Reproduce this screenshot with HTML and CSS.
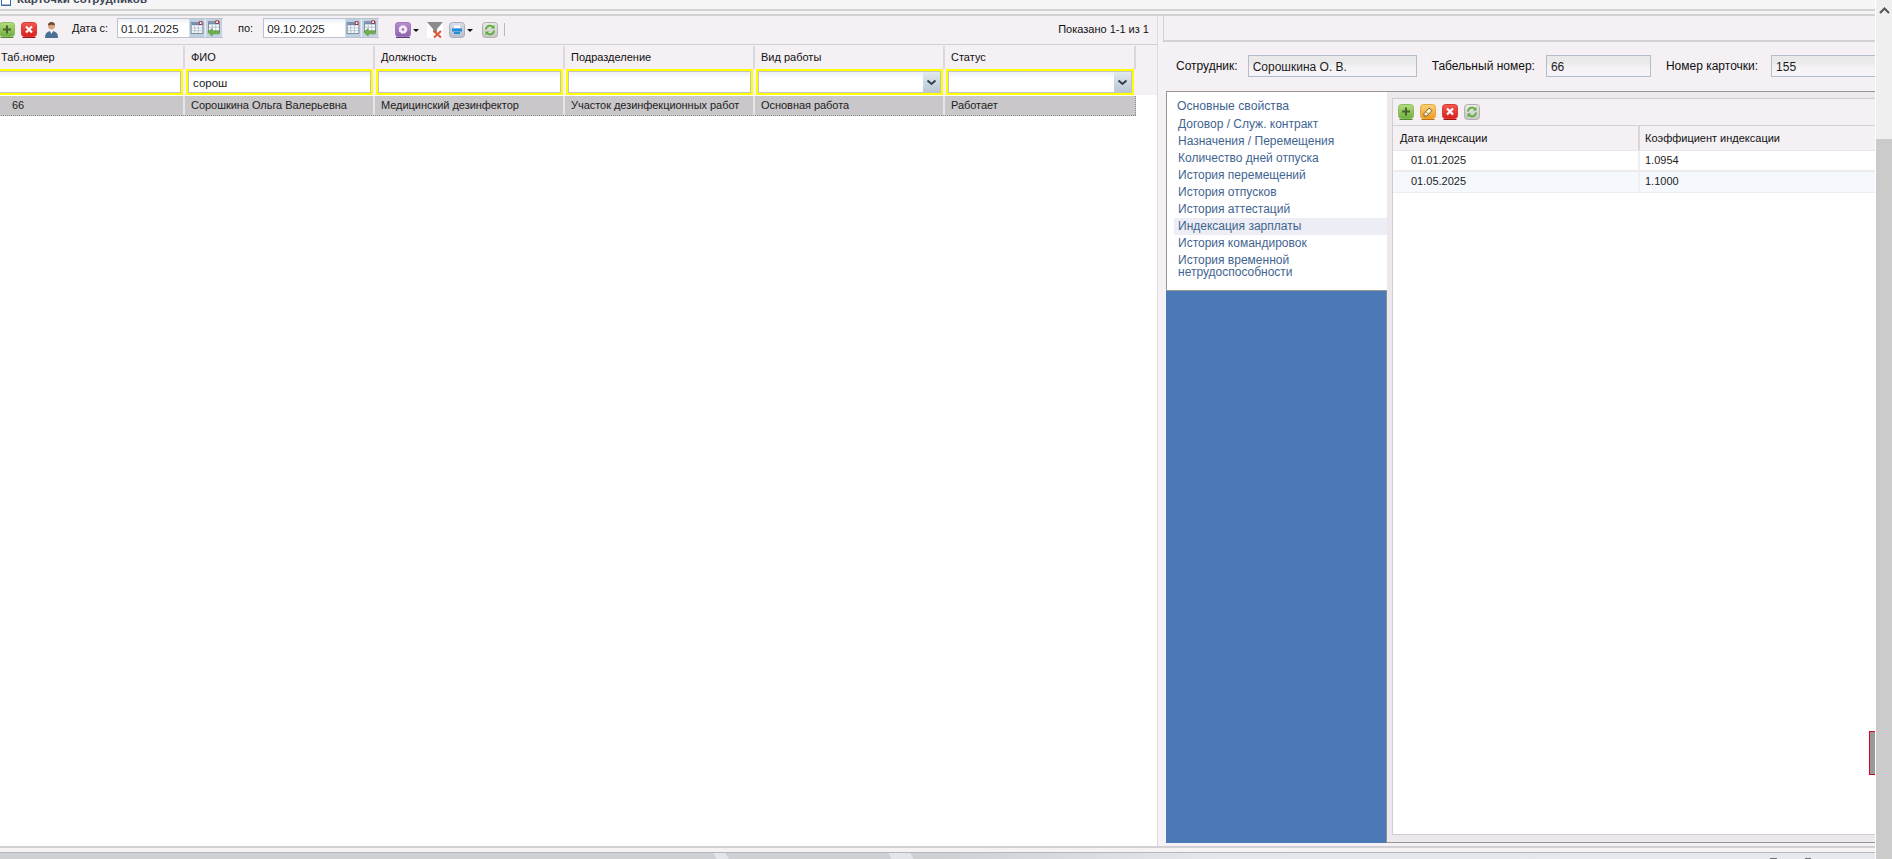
FILE: index.html
```html
<!DOCTYPE html>
<html lang="ru">
<head>
<meta charset="utf-8">
<title>Карточки сотрудников</title>
<link rel="stylesheet" href="styles.css">
</head>
<body>
<svg class="defs" width="0" height="0" aria-hidden="true">
  <defs>
    <linearGradient id="gGreen" x1="0" y1="0" x2="0" y2="1"><stop offset="0" stop-color="#b4de7c"/><stop offset="1" stop-color="#6fae3f"/></linearGradient>
    <linearGradient id="gRed" x1="0" y1="0" x2="0" y2="1"><stop offset="0" stop-color="#f25a4e"/><stop offset="1" stop-color="#d81f1f"/></linearGradient>
    <linearGradient id="gOrange" x1="0" y1="0" x2="0" y2="1"><stop offset="0" stop-color="#fbd27a"/><stop offset="1" stop-color="#f29a1e"/></linearGradient>
    <linearGradient id="gPurple" x1="0" y1="0" x2="0" y2="1"><stop offset="0" stop-color="#b78fd0"/><stop offset="1" stop-color="#8f62ad"/></linearGradient>
    <linearGradient id="gGrey" x1="0" y1="0" x2="0" y2="1"><stop offset="0" stop-color="#e8e8e4"/><stop offset="1" stop-color="#c4c6c2"/></linearGradient>
    <linearGradient id="gPrint" x1="0" y1="0" x2="0" y2="1"><stop offset="0" stop-color="#d9dfe8"/><stop offset="1" stop-color="#b4bdca"/></linearGradient>
    <symbol id="i-add" viewBox="0 0 16 16"><rect x=".5" y=".5" width="15" height="14" rx="3" fill="url(#gGreen)" stroke="#8dbb62"/><path d="M1.5 15.500h13" stroke="#55872c"/><path d="M8 3.500v8M4 7.500h8" stroke="#46622f" stroke-width="2"/></symbol>
    <symbol id="i-del" viewBox="0 0 16 16"><rect x=".5" y=".5" width="15" height="14" rx="3" fill="url(#gRed)" stroke="#d93a32"/><path d="M1.5 15.500h13" stroke="#9c1414"/><path d="M5 4.500l6 6M11 4.500l-6 6" stroke="#fff" stroke-width="2.200"/></symbol>
    <symbol id="i-edit" viewBox="0 0 16 16"><rect x=".5" y=".5" width="15" height="14" rx="3" fill="url(#gOrange)" stroke="#e8a640"/><path d="M1.5 15.500h13" stroke="#b8720f"/><path d="M4 9.500l5-5.500 3 2.500-5 5.500-3 0z" fill="#fff3d0" stroke="#6b5a3a" stroke-width=".9"/><path d="M6 8l3 2.500" stroke="#6b5a3a" stroke-width=".7"/></symbol>
    <symbol id="i-refresh" viewBox="0 0 16 16"><rect x=".5" y=".5" width="15" height="15" rx="3" fill="url(#gGrey)" stroke="#b0b2ae"/><path d="M4 7.500a4 4 0 0 1 7-2.500M12 8.500a4 4 0 0 1-7 2.500" fill="none" stroke="#58ad35" stroke-width="1.700"/><path d="M12.500 2.800v3.700H8.800zM3.500 13.200V9.500h3.700z" fill="#58ad35"/></symbol>
    <symbol id="i-cal" viewBox="0 0 17 20"><rect width="17" height="20" fill="#bcd0e2"/><rect x="2" y="4" width="13" height="12" fill="#fff" stroke="#6d7f93"/><path d="M2.500 4.500h12v2.500h-12z" fill="#6f8db0"/><path d="M6 7v9M10 7v9M2 10h13M2 13h13" stroke="#9fb0c2" stroke-width=".8"/><rect x="11" y="3" width="3" height="3" fill="#fff" stroke="#a01828" stroke-width=".9"/></symbol>
    <symbol id="i-calback" viewBox="0 0 18 20"><rect width="18" height="20" fill="#c5d3e0"/><rect x="3" y="3" width="12" height="11" fill="#fff" stroke="#6d7f93"/><path d="M3.500 3.500h11v2.500h-11z" fill="#6f8db0"/><path d="M7 6v8M11 6v8M3 9h12" stroke="#9fb0c2" stroke-width=".8"/><rect x="11" y="2" width="3" height="3" fill="#fff" stroke="#a01828" stroke-width=".9"/><path d="M2 14.500l5-4v2.500h8v3.500h-8v2.500z" fill="#6fb04a" stroke="#4d8a32" stroke-width=".6"/></symbol>
  </defs>
</svg>

<div class="app">
  <div class="main">
    <header class="title">
      <svg class="title-icon" width="10" height="9" viewBox="0 0 10 9"><rect x=".5" y="-5" width="9" height="10" fill="#fff" stroke="#3c6da8"/><path d="M0 5.500h10" stroke="#3c6da8"/></svg>
      <span class="title-text">Карточки сотрудников</span>
    </header>
    <div class="rule"></div>
    <div class="rule-gap"></div>
    <div class="rule"></div>

    <div class="workspace">
      <section class="left">
        <div class="left-top">
          <div class="toolbar">
            <div class="tools">
              <svg class="ic16 add-first"><use href="#i-add"/></svg>
              <svg class="ic16 t-del"><use href="#i-del"/></svg>
              <svg class="person" width="13" height="16" viewBox="0 0 13 16"><circle cx="6.500" cy="4" r="3.400" fill="#d9a37e"/><path d="M3 3.500a3.500 3.500 0 0 1 7 0c-1.500-1-4.500-1-7 0z" fill="#6b4a32"/><path d="M0 16c0-5 2.500-7 6.500-7s6.500 2 6.500 7z" fill="#4a7299"/><path d="M5 9h3l-1.500 3z" fill="#fff"/></svg>
              <span class="lbl lbl-from">Дата с:</span>
              <div class="datefield"><input class="date" value="01.01.2025"><svg class="cal1"><use href="#i-cal"/></svg><svg class="cal2"><use href="#i-calback"/></svg></div>
              <span class="lbl lbl-to">по:</span>
              <div class="datefield wide"><input class="date" value="09.10.2025"><svg class="cal1"><use href="#i-cal"/></svg><svg class="cal2"><use href="#i-calback"/></svg></div>
              <svg class="ic16 t-purple" viewBox="0 0 16 16"><rect x=".5" y=".5" width="15" height="14" rx="2.500" fill="url(#gPurple)" stroke="#a07cbc"/><path d="M1 15.500h14" stroke="#5f3c80"/><circle cx="8" cy="7.500" r="3.800" fill="#f4e8fa" stroke-dasharray="2 1" stroke="#fff"/><circle cx="8" cy="7.500" r="1.300" fill="#9a6fb8"/></svg>
              <i class="caret"></i>
              <svg class="ic16 t-filter" viewBox="0 0 16 16"><rect width="16" height="16" fill="#fff"/><path d="M0 0h16l-6 7v6l-4-3V7z" fill="#8b8b8b"/><path d="M7 9l7 6.500M14 9l-7 6.500" stroke="#e2583e" stroke-width="2.200"/></svg>
              <svg class="ic16 t-print" viewBox="0 0 16 16"><rect x=".5" y=".5" width="15" height="15" rx="3" fill="url(#gPrint)" stroke="#a6afbb"/><rect x="5" y="3.500" width="6" height="2.500" fill="#fff"/><rect x="3" y="6.500" width="10" height="3" fill="#1f8fdc"/><rect x="5" y="10" width="6" height="2" fill="#1f8fdc"/></svg>
              <i class="caret"></i>
              <svg class="ic16 t-refresh"><use href="#i-refresh"/></svg>
              <i class="tsep"></i>
            </div>
            <span class="shown">Показано 1-1 из 1</span>
          </div>
          <div class="grid-head">
            <div class="grow head-row">
              <div class="hc">Таб.номер</div><div class="hc">ФИО</div><div class="hc">Должность</div><div class="hc">Подразделение</div><div class="hc">Вид работы</div><div class="hc">Статус</div>
            </div>
            <div class="grow filter-row">
              <div class="fc"><input class="finput"></div>
              <div class="fc"><input class="finput" value="сорош"></div>
              <div class="fc"><input class="finput"></div>
              <div class="fc"><input class="finput"></div>
              <div class="fc"><div class="fcombo"><input class="finput"><span class="chev"><svg width="11" height="7" viewBox="0 0 11 7"><path d="M1.500 1.500l4 3.500 4-3.500" fill="none" stroke="#333f4c" stroke-width="2"/></svg></span></div></div>
              <div class="fc"><div class="fcombo"><input class="finput"><span class="chev"><svg width="11" height="7" viewBox="0 0 11 7"><path d="M1.500 1.500l4 3.500 4-3.500" fill="none" stroke="#333f4c" stroke-width="2"/></svg></span></div></div>
            </div>
          </div>
        </div>
        <div class="grow data-row">
          <div class="dc first">66</div><div class="dc">Сорошкина Ольга Валерьевна</div><div class="dc">Медицинский дезинфектор</div><div class="dc">Участок дезинфекционных работ</div><div class="dc">Основная работа</div><div class="dc">Работает</div>
        </div>
      </section>

      <div class="splitter"></div>

      <section class="right">
        <div class="right-top"></div>
        <div class="right-gap"></div>
        <div class="info">
          <label class="info-lbl l1">Сотрудник:</label><input class="ro r1" value="Сорошкина О. В." readonly>
          <label class="info-lbl l2">Табельный номер:</label><input class="ro r2" value="66" readonly>
          <label class="info-lbl l3">Номер карточки:</label><input class="ro r3" value="155" readonly>
        </div>
        <div class="split">
          <div class="nav-col">
            <nav class="nav">
              <a class="nav-item top">Основные свойства</a>
              <a class="nav-item second">Договор / Служ. контракт</a>
              <a class="nav-item">Назначения / Перемещения</a>
              <a class="nav-item">Количество дней отпуска</a>
              <a class="nav-item">История перемещений</a>
              <a class="nav-item">История отпусков</a>
              <a class="nav-item">История аттестаций</a>
              <a class="nav-item active">Индексация зарплаты</a>
              <a class="nav-item">История командировок</a>
              <a class="nav-item">История временной<br>нетрудоспособности</a>
            </nav>
            <div class="blue"></div>
          </div>
          <div class="content-col">
            <div class="content">
              <div class="c-tools">
                <svg class="ic16"><use href="#i-add"/></svg>
                <svg class="ic16"><use href="#i-edit"/></svg>
                <svg class="ic16"><use href="#i-del"/></svg>
                <svg class="ic16"><use href="#i-refresh"/></svg>
              </div>
              <div class="c-row c-head"><div class="c1">Дата индексации</div><div class="c2">Коэффициент индексации</div></div>
              <div class="c-row c-data"><div class="c1 ind">01.01.2025</div><div class="c2">1.0954</div></div>
              <div class="c-row c-data alt"><div class="c1 ind">01.05.2025</div><div class="c2">1.1000</div></div>
            </div>
          </div>
        </div>
      </section>
    </div>

    <div class="foot-rule"></div>
    <div class="foot-gap"></div>
    <div class="taskbar"><i class="tb-streak s1"></i><i class="tb-streak s2"></i><i class="tb-mark m1"></i><i class="tb-mark m2"></i></div>
    <div class="pin"></div>
  </div>
  <aside class="scroll">
    <div class="scroll-track"><svg class="up" width="11" height="7" viewBox="0 0 11 7"><path d="M1 6l4.500-4.500L10 6" fill="none" stroke="#555" stroke-width="2"/></svg></div>
    <div class="scroll-thumb"></div>
  </aside>
</div>
</body>
</html>
```
FILE: styles.css
```css
* { box-sizing: border-box; }
html, body { margin: 0; padding: 0; height: 100%; overflow: hidden; background: #fff; }
body { font: 11px/14px "Liberation Sans", Arial, sans-serif; color: #1c1c1c; }
.defs { position: absolute; }
svg { display: block; flex: none; }
input { font: inherit; color: inherit; margin: 0; outline: none; }

.app { display: flex; width: 1892px; height: 859px; }
.main { position: relative; width: 1875px; display: flex; flex-direction: column; overflow: hidden; }

.title { height: 9px; background: #f5f5f5; display: flex; overflow: hidden; padding-left: 1px; }
.title-text { font-weight: bold; color: #3c4654; margin: -8px 0 0 6px; font-size: 11.500px; letter-spacing: .1px; }
.rule { height: 2px; background: #d3d0d3; flex: none; }
.rule-gap { height: 3px; background: #f4f4f4; flex: none; }

.workspace { display: flex; height: 830px; flex: none; }

/* left */
.left { width: 1157px; background: #fff; overflow: hidden; }
.left-top { background: #f4f0f4; height: 79px; }
.toolbar { height: 29px; border-bottom: 1px solid #d3d0d3; display: flex; justify-content: space-between; }
.tools { display: flex; align-items: flex-start; padding-top: 6px; margin-left: -1px; }
.ic16 { width: 16px; height: 16px; }
.t-del { margin-left: 6px; }
.person { margin-left: 8px; }
.lbl { color: #111; }
.lbl-from { margin-left: 14px; margin-top: -1px; }
.datefield { display: flex; height: 20px; margin: -4px 0 0 9px; border: 1px solid #b9c3d3; border-right: 0; }
.date { width: 71px; height: 18px; border: 0; padding: 2px 0 0 3px; font-size: 11.500px; background: linear-gradient(#eef0f4, #fff 30%); }
.cal1 { width: 16px; height: 18px; }
.cal2 { width: 18px; height: 18px; }
.datefield.wide .date { width: 81px; }
.lbl-to { margin-left: 15px; margin-top: -1px; }
.datefield.wide { margin-left: 10px; }
.t-purple { margin-left: 16px; }
.caret { width: 0; height: 0; border: 3px solid transparent; border-top: 3px solid #111; border-bottom: 0; margin: 7px 0 0 2px; }
.t-filter { margin-left: 8px; }
.t-print { margin-left: 6px; }
.t-refresh { margin-left: 9px; }
.tsep { width: 1px; height: 13px; background: #a9c0c0; margin: 1px 0 0 6px; }
.shown { margin: 6px 8px 0 0; color: #111; }

.grid-head { padding-top: 1px; }
.grow { display: grid; grid-template-columns: repeat(5, 190px) 191px; width: 1141px; margin-left: -5px; }
.head-row { height: 23px; }
.hc { padding: 2px 0 0 6px; line-height: 18px; border-right: 2px solid #dbd8db; color: #111; }
.filter-row { height: 26px; }
.fc { padding-left: 1px; padding-right: 2px; }
.finput { width: 100%; height: 26px; border: 2px solid #ff0; box-shadow: inset 0 0 0 1px #c3c3c3; background: linear-gradient(#e9edf5, #fff 35%); padding: 2px 0 0 5px; font-size: 11.500px; display: block; }
.fcombo { position: relative; }
.chev { position: absolute; right: 3px; top: 3px; width: 17px; height: 20px; background: linear-gradient(#e2e9ef, #b9c8d6); display: flex; align-items: center; justify-content: center; }

.data-row { margin-top: 1px; height: 20px; background: #c9c7c9; border-bottom: 1px dotted #8c8c8c; }
.dc { padding: 2px 0 0 6px; line-height: 14px; border-right: 2px solid #e6e6e8; color: #222; white-space: nowrap; letter-spacing: -.04px; }
.dc:last-child { border-right: 1px dotted #8c8c8c; }
.dc.first { padding-left: 17px; }

/* splitter */
.splitter { width: 6px; background: #f5f1f5; border-left: 1px solid #dedbde; }

/* right */
.right { width: 712px; display: flex; flex-direction: column; background: #f5f1f5; }
.right-top { height: 26px; flex: none; background: #f4f0f4; border-left: 1px solid #d3d0d3; border-bottom: 2px solid #d3d0d3; }
.right-gap { height: 3px; flex: none; }
.info { height: 46px; flex: none; margin-left: 3px; background: #f4f0f4; display: flex; align-items: flex-start; padding-top: 10px; white-space: nowrap; overflow: hidden; font-size: 12px; }
.info-lbl { color: #111; margin-top: 4px; }
.l1 { margin-left: 10px; }
.l2 { margin-left: 15px; }
.l3 { margin-left: 15px; }
.ro { height: 22px; border: 1px solid #b4bccf; background: linear-gradient(#e9e9e9 30%, #f5f3f6 60%); padding: 2px 0 0 4px; flex: none; }
.r1 { width: 169px; margin-left: 10px; }
.r2 { width: 105px; margin-left: 11px; }
.r3 { width: 109px; margin-left: 13px; }

.split { height: 752px; flex: none; display: flex; margin-left: 3px; margin-bottom: 3px; }
.nav-col { width: 221px; display: flex; flex-direction: column; }
.nav { height: 200px; flex: none; background: #fff; border-top: 1px solid #979797; border-left: 1px solid #979797; border-bottom: 1px solid #979797; padding: 5px 0 0 7px; font-size: 12px; line-height: 12px; color: #3f6590; }
.nav-item { display: block; padding: 2.500px 0 2.500px 4px; color: #3f6590; white-space: nowrap; }
.nav-item.top { padding-bottom: 3.500px; padding-left: 3px; font-size: 12.200px; }
.nav-item.second { padding-bottom: 3px; }
.nav-item.active { background: #ecedf5; }
.blue { flex: 1; background: #4a79b5; border-right: 1px solid #8d8d8d; }
.content-col { flex: 1; min-width: 0; background: #ece8ec; border-top: 1px solid #979797; border-bottom: 1px solid #979797; padding: 6px 0 7px 5px; }
.content { height: 100%; background: #fff; border: 1px solid #d0ccd0; border-right: 0; }
.c-tools { height: 27px; background: #f4f0f4; border-bottom: 1px solid #d6d2d6; display: flex; gap: 6px; padding: 5px 0 0 5px; }
.c-row { display: grid; grid-template-columns: 245px 1fr; }
.c-head { height: 25px; background: #f4f0f4; border-bottom: 1px solid #eae7ea; line-height: 24px; color: #111; }
.c-head .c1 { padding-left: 7px; }
.c-head .c2 { padding-left: 5px; border-left: 2px solid #d9d6d9; }
.c-data { height: 21px; border-bottom: 2px solid #eeebee; line-height: 18px; color: #222; }
.c-data.alt { background: #f5f9fd; border-bottom-width: 1px; }
.c-data .c2 { padding-left: 5px; border-left: 2px solid #f0eef0; }
.ind { padding-left: 18px; }

/* bottom */
.foot-rule { height: 2px; flex: none; background: #d3d0d3; }
.foot-gap { flex: none; background: #f5f4f5; border-bottom: 1px solid #b8b6b8; height: 5px; }
.taskbar { position: relative; flex: 1; background: linear-gradient(90deg, #cdd1d4 0, #cdd1d4 50%, #e4e8ec 65%, #e6e9ed 100%); overflow: hidden; }
.tb-streak { position: absolute; top: 0; height: 6px; width: 12px; background: #e2e5ea; transform: skewX(30deg); }
.s1 { left: 715px; }
.s2 { left: 890px; width: 22px; }
.tb-mark { position: absolute; top: 5px; height: 1px; background: #6c7074; }
.m1 { left: 1770px; width: 7px; }
.m2 { left: 1805px; width: 6px; }
.pin { position: absolute; left: 1869px; top: 731px; width: 6px; height: 44px; background: #999; border-style: solid; border-color: #e2001a; border-width: 1.500px 0 1.500px 1.500px; }

/* scrollbar */
.scroll { width: 17px; border-left: 1px solid #fff; background: #efefef; display: flex; flex-direction: column; }
.scroll-track { height: 139px; flex: none; padding: 7px 0 0 3px; }
.scroll-thumb { flex: 1; background: #cbcbcb; }
```
